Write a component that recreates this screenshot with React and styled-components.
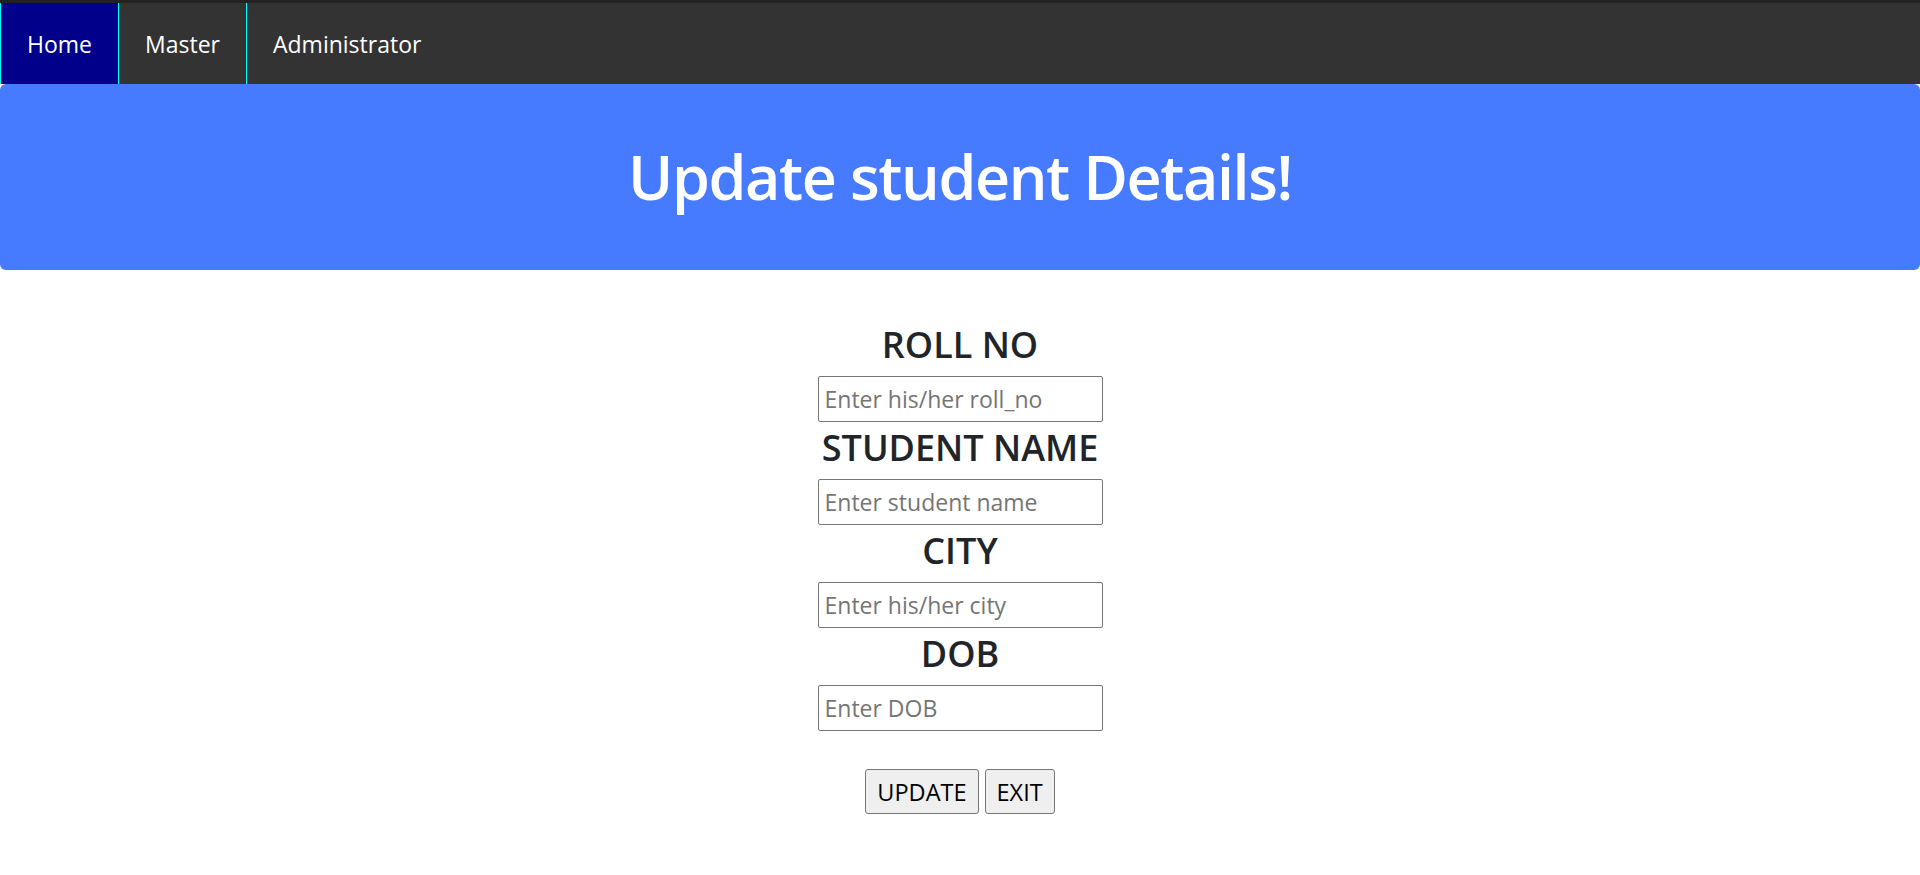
import styled, { createGlobalStyle } from 'styled-components'

const GlobalStyle = createGlobalStyle`
  body {
    margin: 0;
    font-family: "Open Sans", "Noto Sans", sans-serif;
    background: #fff;
  }
`

const Nav = styled.ul`
  display: flex;
  margin: 0;
  padding: 0;
  list-style: none;
  height: 81px;
  background: #333;
  border-top: 3px solid #222;
`

const NavItem = styled.li`
  display: flex;
  align-items: center;
  padding: 0 26px;
  font-size: 23px;
  color: #fff;
  background: ${(p) => (p.active ? '#00008b' : 'transparent')};
  border-left: ${(p) => (p.first ? '1px solid #0ff' : 'none')};
  border-right: ${(p) => (p.divider ? '1px solid #0ff' : 'none')};
  cursor: pointer;
`

const Banner = styled.div`
  display: flex;
  align-items: center;
  justify-content: center;
  height: 186px;
  padding-bottom: 2px;
  box-sizing: border-box;
  background: #467bff;
  border-radius: 6px;
`

const Title = styled.h1`
  margin: 0;
  font-size: 61px;
  font-weight: 600;
  color: #fff;
  letter-spacing: -1.4px;
`

const Form = styled.form`
  display: flex;
  flex-direction: column;
  align-items: center;
  padding-top: 49px;
`

const Label = styled.h2`
  margin: 0 0 9px;
  padding-top: 3px;
  font-size: 36px;
  line-height: 45px;
  font-weight: 600;
  color: #212529;
`

const Input = styled.input`
  box-sizing: border-box;
  width: 285px;
  height: 46px;
  padding: 0 6px;
  border: 1px solid #767676;
  border-radius: 2px;
  font-family: inherit;
  font-size: 23px;
  color: #212529;

  &::placeholder {
    color: #757575;
  }
`

const Buttons = styled.div`
  display: flex;
  gap: 6px;
  margin-top: 38px;
`

const Button = styled.button`
  box-sizing: border-box;
  height: 45px;
  padding: 0 11px;
  background: #efefef;
  border: 1px solid #767676;
  border-radius: 3px;
  font-family: inherit;
  font-size: 23.5px;
  color: #000;
`

const fields = [
  { label: 'ROLL NO', placeholder: 'Enter his/her roll_no' },
  { label: 'STUDENT NAME', placeholder: 'Enter student name' },
  { label: 'CITY', placeholder: 'Enter his/her city' },
  { label: 'DOB', placeholder: 'Enter DOB' },
]

const App = () => {
  return (
    <>
      <GlobalStyle />
      <Nav>
        <NavItem active first divider>Home</NavItem>
        <NavItem divider>Master</NavItem>
        <NavItem>Administrator</NavItem>
      </Nav>
      <Banner>
        <Title>Update student Details!</Title>
      </Banner>
      <Form onSubmit={(e) => e.preventDefault()}>
        {fields.map((f) => (
          <div key={f.label} style={{ display: 'contents' }}>
            <Label>{f.label}</Label>
            <Input placeholder={f.placeholder} />
          </div>
        ))}
        <Buttons>
          <Button type="submit">UPDATE</Button>
          <Button type="button">EXIT</Button>
        </Buttons>
      </Form>
    </>
  )
}

export default App
